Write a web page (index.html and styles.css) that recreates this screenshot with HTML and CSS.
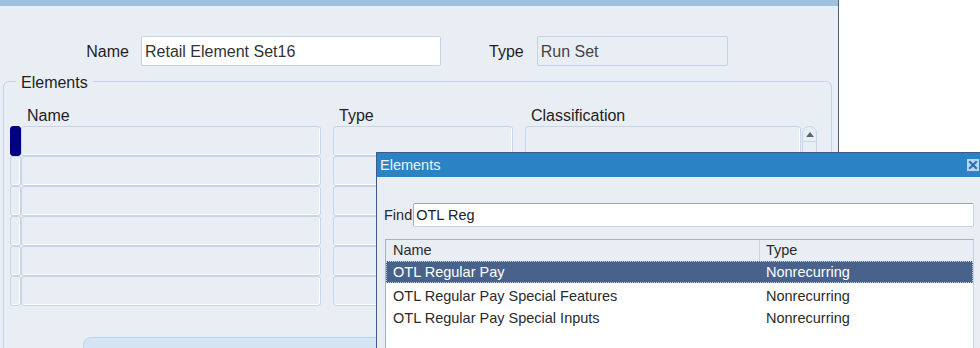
FILE: index.html
```html
<!DOCTYPE html>
<html lang="en">
<head>
  <meta charset="UTF-8" />
  <title>Element Set</title>
  <link rel="stylesheet" href="styles.css">
</head>
<body>

  <div class="screen">
    <div class="window">
      <div class="topbar"></div>

      <div class="form-top">
        <label class="field-label" for="setName">Name</label>
        <input class="text-field name-field" id="setName" type="text" value="Retail Element Set16" />
        <label class="type-label" for="setType">Type</label>
        <input class="text-field type-field" id="setType" type="text" value="Run Set" readonly />
      </div>

      <div class="group">
        <span class="group-title">Elements</span>

        <div class="col-heads">
          <span class="head-name">Name</span>
          <span class="head-type">Type</span>
          <span class="head-class">Classification</span>
        </div>

        <div class="grid">
          <div class="rows">
            <div class="row">
              <div class="marker current"></div>
              <div class="cell c-name"></div>
              <div class="cell c-type"></div>
              <div class="cell c-class"></div>
            </div>
            <div class="row">
              <div class="marker"></div>
              <div class="cell c-name"></div>
              <div class="cell c-type"></div>
              <div class="cell c-class"></div>
            </div>
            <div class="row">
              <div class="marker"></div>
              <div class="cell c-name"></div>
              <div class="cell c-type"></div>
              <div class="cell c-class"></div>
            </div>
            <div class="row">
              <div class="marker"></div>
              <div class="cell c-name"></div>
              <div class="cell c-type"></div>
              <div class="cell c-class"></div>
            </div>
            <div class="row">
              <div class="marker"></div>
              <div class="cell c-name"></div>
              <div class="cell c-type"></div>
              <div class="cell c-class"></div>
            </div>
            <div class="row">
              <div class="marker"></div>
              <div class="cell c-name"></div>
              <div class="cell c-type"></div>
              <div class="cell c-class"></div>
            </div>
          </div>

          <div class="scrollbar">
            <div class="scroll-up">
              <svg width="8" height="5" viewBox="0 0 8 5"><path d="M0 5 L4 0 L8 5 Z" fill="#5d6577"/></svg>
            </div>
          </div>
        </div>

        <div class="bottom-panel"></div>
      </div>
    </div>

    <div class="outside"></div>
  </div>

  <!-- list of values popup -->
  <div class="dialog">
    <div class="dialog-title">
      <span>Elements</span>
      <span class="close-btn">
        <svg width="12" height="12" viewBox="0 0 12 12">
          <path d="M3 3 L9 9 M9 3 L3 9" stroke="#2f6fae" stroke-width="2.2" stroke-linecap="square"/>
        </svg>
      </span>
    </div>

    <div class="dialog-body">
      <div class="find-row">
        <label class="find-label" for="find">Find</label>
        <input class="find-field" id="find" type="text" value="OTL Reg" />
      </div>

      <div class="lov-list">
        <div class="lov-head">
          <span class="lov-name">Name</span>
          <span class="lov-type">Type</span>
        </div>
        <div class="lov-row selected">
          <span class="lov-name">OTL Regular Pay</span>
          <span class="lov-type">Nonrecurring</span>
        </div>
        <div class="lov-row">
          <span class="lov-name">OTL Regular Pay Special Features</span>
          <span class="lov-type">Nonrecurring</span>
        </div>
        <div class="lov-row">
          <span class="lov-name">OTL Regular Pay Special Inputs</span>
          <span class="lov-type">Nonrecurring</span>
        </div>
      </div>
    </div>
  </div>

</body>
</html>
```

FILE: styles.css
```css
body {
  margin: 0;
  width: 980px;
  height: 348px;
  overflow: hidden;
  position: relative;
  background-color: #fff;
  font-family: "Liberation Sans", Arial, sans-serif;
  font-size: 16px;
  color: #1e1e1e;
}

.screen {
  display: flex;
  height: 348px;
}

.window {
  width: 838px;
  height: 348px;
  background-color: #e9eef5;
  border-right: 1px solid #4f5f7a;
  overflow: hidden;
}

.outside {
  flex: 1;
  background-color: #fff;
}

.topbar {
  height: 6px;
  background-color: #9fc0de;
}

/* name / type header */
.form-top {
  display: flex;
  align-items: center;
  height: 30px;
  margin-top: 30px;
}

.field-label {
  width: 129px;
  text-align: right;
  margin-right: 12px;
  padding-top: 2px;
}

.type-label {
  margin-left: 48px;
  margin-right: 13px;
  padding-top: 2px;
}

.text-field {
  box-sizing: border-box;
  height: 30px;
  padding: 2px 3px 0;
  border: 1px solid #c3d3ea;
  border-radius: 2px;
  font-family: "Liberation Sans", Arial, sans-serif;
  font-size: 16px;
  color: #333;
  outline: none;
}

.name-field {
  width: 300px;
  background-color: #fff;
}

.type-field {
  width: 191px;
  background-color: #e9eef5;
  color: #444;
}

/* elements block */
.group {
  margin: 15px 6px 0 3px;
  height: 300px;
  border: 1px solid #c3d3e8;
  border-bottom: none;
  border-radius: 6px 6px 0 0;
}

.group-title {
  display: block;
  width: max-content;
  margin: -8px 0 0 12px;
  padding: 0 5px;
  line-height: 18px;
  background-color: #e9eef5;
}

.col-heads {
  display: flex;
  margin-top: 15px;
  height: 18px;
  line-height: 18px;
}

.head-name {
  margin-left: 23px;
  width: 312px;
}

.head-type {
  width: 192px;
}

.grid {
  display: flex;
  margin-top: 1px;
  padding-left: 6px;
}

.row {
  display: flex;
  height: 30px;
}

.marker,
.cell {
  box-sizing: border-box;
  height: 30px;
  border: 1px solid #c6d5ea;
  border-radius: 3px;
  background-color: #e9eef5;
  box-shadow: inset -1px -1px 0 #fff;
}

.marker {
  width: 11px;
}

.marker.current {
  background-color: #000080;
  border-color: #000080;
  box-shadow: none;
}

.c-name {
  width: 300px;
}

.c-type {
  width: 180px;
  margin-left: 12px;
}

.c-class {
  width: 276px;
  margin-left: 12px;
}

.scrollbar {
  box-sizing: border-box;
  width: 15px;
  height: 180px;
  margin-left: 1px;
  border: 1px solid #c6d5ea;
  border-radius: 7px 7px 0 0;
}

.scroll-up {
  height: 14px;
  border-bottom: 1px solid #c6d5ea;
  display: flex;
  align-items: center;
  justify-content: center;
}

.bottom-panel {
  margin: 31px 0 0 79px;
  width: 600px;
  height: 40px;
  background-color: #d4e4f4;
  border: 1px solid #c2d4ea;
  border-radius: 8px 8px 0 0;
}

/* popup */
.dialog {
  position: absolute;
  left: 376px;
  top: 152px;
  width: 606px;
  height: 210px;
  border: 1px solid #3e5b88;
  background-color: #e9eef5;
  font-size: 14.5px;
  color: #2b2b2b;
}

.dialog-title {
  display: flex;
  align-items: center;
  justify-content: space-between;
  height: 24px;
  padding: 0 4px 0 3px;
  background-color: #2c83c3;
  color: #eef4fa;
  font-size: 14.5px;
}

.close-btn {
  display: flex;
  width: 12px;
  height: 12px;
  background-color: #b8d6ef;
}

.dialog-body {
  padding: 26px 9px 0 7px;
}

.find-row {
  display: flex;
  align-items: center;
  height: 24px;
}

.find-label {
  margin-right: 1px;
}

.find-field {
  box-sizing: border-box;
  flex: 1;
  height: 24px;
  padding: 0 2px;
  border: 1px solid #c4d4e8;
  border-top-color: #a3a3a3;
  border-left-color: #a8b0bc;
  border-radius: 2px;
  background-color: #fff;
  font-family: "Liberation Sans", Arial, sans-serif;
  font-size: 14.5px;
  color: #222;
  outline: none;
}

.lov-list {
  margin: 12px 0 0 1px;
  height: 120px;
  background-color: #fff;
  border: 1px solid #c3d2e6;
  border-top-color: #a9b1bc;
  border-left-color: #a9b1bc;
}

.lov-head,
.lov-row {
  display: flex;
  height: 22px;
  line-height: 22px;
}

.lov-head {
  height: 21px;
  line-height: 21px;
  background-color: #e9eef5;
}

.lov-name {
  box-sizing: border-box;
  width: 374px;
  padding-left: 7px;
}

.lov-type {
  padding-left: 6px;
}

.lov-head .lov-name {
  border-right: 1px solid #cbd3de;
}

.lov-row.selected {
  box-sizing: border-box;
  margin-bottom: 2px;
  background-color: #48628c;
  color: #fff;
  border: 1px dotted #c6cfdd;
  line-height: 20px;
}

.lov-row.selected .lov-name {
  padding-left: 6px;
}

.lov-row.selected .lov-type {
  padding-left: 5px;
}
```
